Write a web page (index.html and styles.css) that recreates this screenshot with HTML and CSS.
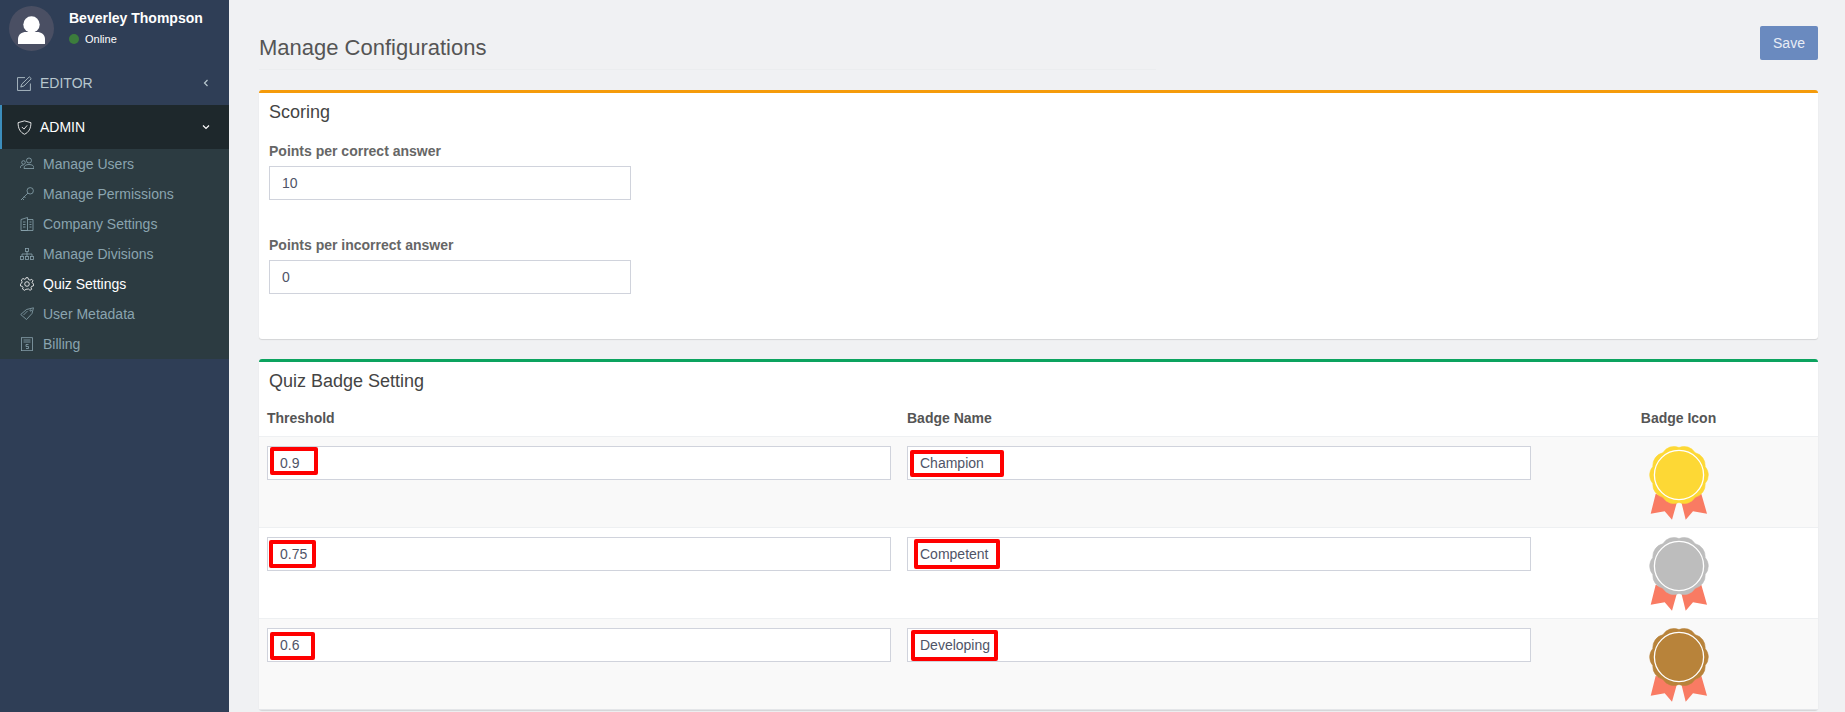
FILE: index.html
```html
<!DOCTYPE html>
<html lang="en">
<head>
<meta charset="utf-8">
<title>Manage Configurations</title>
<link rel="stylesheet" href="styles.css">
</head>
<body>
<svg class="defs" width="0" height="0" aria-hidden="true">
  <symbol id="medal" viewBox="0 0 60 74">
    <path fill="#f97b63" d="M6.7 47.7 1.7 67.7 15.7 65.3 23 73.7 28 56ZM52.3 47.7 58 67.7 44 65.3 36.7 73.7 32.3 56Z"/>
    <path fill="currentColor" stroke="currentColor" stroke-width=".6" d="M30 1.500A13 13 0 0 1 46.160 6.750A13 13 0 0 1 56.150 20.500A13 13 0 0 1 56.150 37.500A13 13 0 0 1 46.160 51.250A13 13 0 0 1 30 56.500A13 13 0 0 1 13.840 51.250A13 13 0 0 1 3.850 37.500A13 13 0 0 1 3.850 20.500A13 13 0 0 1 13.840 6.750A13 13 0 0 1 30 1.500Z"/>
    <circle cx="30" cy="29" r="24.600" fill="none" stroke="#fff" stroke-width="1.300"/>
  </symbol>
</svg>
<div class="app">
  <aside class="sidebar">
    <div class="user">
      <div class="avatar">
        <svg viewBox="0 0 45 45" width="45" height="45"><circle cx="22.500" cy="18.500" r="8.200" fill="#fff"/><path fill="#fff" d="M9 38V33C9 28.500 13 26 17 26H28C32 26 36 28.500 36 33V38Z"/></svg>
      </div>
      <div class="user-info">
        <div class="user-name">Beverley Thompson</div>
        <div class="user-status"><span class="dot"></span>Online</div>
      </div>
    </div>
    <nav>
      <div class="nav-head">
        <svg class="ico" viewBox="0 0 14 14"><path d="M12.500 7V13.500H.5V1.500H7.500"/><path d="M4.500 7.500 11.500.8 13.300 2.500 6.500 9.300 3.500 10.300Z"/></svg>
        <span>EDITOR</span>
        <svg class="chev" viewBox="0 0 8 8"><path d="M5.500 1 2.500 4 5.500 7"/></svg>
      </div>
      <div class="nav-head nav-head-open">
        <svg class="ico" viewBox="0 0 14 14"><path d="M7 .8 13 2.500C13 8 11 11.500 7 13.300 3 11.500 1 8 1 2.500Z"/><path d="M4.500 6.500 6.500 8.500 9.500 5"/></svg>
        <span>ADMIN</span>
        <svg class="chev" viewBox="0 0 8 8"><path d="M1 2.500 4 5.500 7 2.500"/></svg>
      </div>
      <ul class="sub">
        <li class="sub-item">
          <svg class="ico" viewBox="0 0 14 14"><circle cx="9" cy="3.500" r="2.500"/><path d="M4 11.500C4 8.500 6 7.500 9 7.500S14 8.500 14 11.500Z"/><circle cx="3.500" cy="5.500" r="1.800"/><path d="M.3 11C.3 9 1.500 8 3.500 8"/></svg>
          Manage Users
        </li>
        <li class="sub-item">
          <svg class="ico" viewBox="0 0 14 14"><circle cx="10.200" cy="3.800" r="3.200"/><path d="M8 6 1 13M2.500 11.500 4 13M4 9.500 5.500 11"/></svg>
          Manage Permissions
        </li>
        <li class="sub-item">
          <svg class="ico" viewBox="0 0 14 14"><path d="M1 13.500V2.500L7.500.5V13.500ZM7.500 2.500H13V13.500H1M3 5H5.500M3 7.500H5.500M3 10H5.500M9.500 5H11.500M9.500 7.500H11.500M9.500 10H11.500"/></svg>
          Company Settings
        </li>
        <li class="sub-item">
          <svg class="ico" viewBox="0 0 14 14"><rect x="5.500" y="1.500" width="3" height="3"/><rect x=".5" y="9.500" width="3" height="3"/><rect x="5.500" y="9.500" width="3" height="3"/><rect x="10.500" y="9.500" width="3" height="3"/><path d="M7 4.500V9.500M2 9.500V7H12V9.500"/></svg>
          Manage Divisions
        </li>
        <li class="sub-item sub-item-active">
          <svg class="ico" viewBox="0 0 14 14"><circle cx="7" cy="7" r="2.300"/><path d="M6 .7H8L8.500 2.500 10 3.200 11.700 2.300 13 3.800 12 5.300 12.500 6.300 13.800 7 13.300 9 11.700 9.300 11 10.700 11.700 12.300 10 13.300 8.500 12 6 12.300 4.500 13.300 2.500 12 3 10.500 2.300 9.300.5 9 .3 7 1.800 6 2 4.500 1.300 3 3 1.500 4.700 2.300 5.700 1.800Z"/></svg>
          Quiz Settings
        </li>
        <li class="sub-item">
          <svg class="ico" viewBox="0 0 14 14"><path d="M.7 7.500 6.500 2.500 13.500.8 12 6.500 6.500 12.500Z"/><path d="M3.500 8 7.500 4"/><circle cx="10.700" cy="3.500" r=".7"/></svg>
          User Metadata
        </li>
        <li class="sub-item">
          <svg class="ico" viewBox="0 0 14 14"><rect x="1.500" y=".7" width="11" height="13"/><path d="M3.500 3H10.500M3.500 5H10.500M8.500 7.500H6V9.500H8.500V11.500H6"/></svg>
          Billing
        </li>
      </ul>
    </nav>
  </aside>
  <main class="main">
    <header class="page-head">
      <div class="page-title-wrap"><h1 class="page-title">Manage Configurations</h1></div>
      <button class="btn-save" type="button">Save</button>
    </header>
    <section class="panel panel-orange">
      <h2 class="panel-title">Scoring</h2>
      <div class="field">
        <label class="field-label">Points per correct answer</label>
        <input class="text-input text-input-short" type="text" value="10">
      </div>
      <div class="field">
        <label class="field-label">Points per incorrect answer</label>
        <input class="text-input text-input-short" type="text" value="0">
      </div>
    </section>
    <section class="panel panel-green">
      <h2 class="panel-title">Quiz Badge Setting</h2>
      <table class="badge-table">
        <thead>
          <tr><th class="col-a">Threshold</th><th class="col-b">Badge Name</th><th class="col-c">Badge Icon</th></tr>
        </thead>
        <tbody>
          <tr>
            <td><div class="mark-wrap"><input class="text-input" type="text" value="0.9"><span class="mark mark-t1"></span></div></td>
            <td><div class="mark-wrap"><input class="text-input" type="text" value="Champion"><span class="mark mark-n1"></span></div></td>
            <td class="medal-cell"><svg class="medal medal-gold"><use href="#medal"/></svg></td>
          </tr>
          <tr>
            <td><div class="mark-wrap"><input class="text-input" type="text" value="0.75"><span class="mark mark-t2"></span></div></td>
            <td><div class="mark-wrap"><input class="text-input" type="text" value="Competent"><span class="mark mark-n2"></span></div></td>
            <td class="medal-cell"><svg class="medal medal-silver"><use href="#medal"/></svg></td>
          </tr>
          <tr>
            <td><div class="mark-wrap"><input class="text-input" type="text" value="0.6"><span class="mark mark-t3"></span></div></td>
            <td><div class="mark-wrap"><input class="text-input" type="text" value="Developing"><span class="mark mark-n3"></span></div></td>
            <td class="medal-cell"><svg class="medal medal-bronze"><use href="#medal"/></svg></td>
          </tr>
        </tbody>
      </table>
    </section>
  </main>
</div>
</body>
</html>
```
FILE: styles.css
```css
* { box-sizing: border-box; }
html, body { margin: 0; height: 712px; overflow: hidden; }
body { font-family: "Liberation Sans", Arial, sans-serif; font-size: 14px; color: #4f5467; background: #f0f1f3; }
.defs { position: absolute; }
.app { display: flex; height: 712px; }

.sidebar { width: 229px; flex: none; background: #2f3e56; }
.user { display: flex; height: 61px; padding: 6px 0 0 9px; }
.avatar { width: 45px; height: 45px; border-radius: 50%; background: #4a4f63; overflow: hidden; }
.avatar svg { display: block; }
.user-info { margin-left: 15px; }
.user-name { margin-top: 3px; font-weight: 700; color: #fff; line-height: 18px; }
.user-status { display: flex; align-items: center; margin-top: 5px; font-size: 11px; line-height: 14px; color: #fff; }
.dot { width: 10px; height: 10px; margin-right: 6px; border-radius: 50%; background: #3c7d3c; }

.nav-head { display: flex; align-items: center; height: 44px; padding-left: 17px; color: #b8c7ce; }
.nav-head .ico { margin-right: 8px; width: 15px; height: 15px; }
.nav-head span { flex: 1; }
.chev { width: 8px; height: 8px; margin-right: 19px; fill: none; stroke: currentColor; stroke-width: 1.2; }
.nav-head-open { background: #1e282c; color: #fff; border-left: 2px solid #3c8dbc; padding-left: 15px; }
.ico { width: 14px; height: 14px; flex: none; fill: none; stroke: currentColor; stroke-width: .8; }
.sub { list-style: none; margin: 0; padding: 0; background: #2c3b41; }
.sub-item { display: flex; align-items: center; height: 30px; padding-left: 20px; color: #8aa4af; }
.sub-item .ico { margin-right: 9px; }
.sub-item-active { color: #fff; }

.main { flex: 1; min-width: 0; padding: 26px 27px 0 30px; }
.page-head { display: flex; justify-content: space-between; align-items: flex-start; height: 64px; }
.page-title-wrap { width: 897px; height: 44px; border-bottom: 1px solid #ebedef; }
.page-title { margin: 9px 0 0; font-size: 22px; font-weight: 400; line-height: 25px; color: #555; }
.btn-save { width: 58px; height: 34px; padding: 0; border: 0; border-radius: 2px; background: #6a8abf; color: #e8edf6; font: 14px "Liberation Sans", Arial, sans-serif; }

.panel { margin-bottom: 20px; background: #fff; border-top: 3px solid; border-radius: 3px; box-shadow: 0 1px 1px rgba(0,0,0,.12); }
.panel-orange { height: 249px; padding: 0 10px; border-color: #f59b0a; }
.panel-green { border-color: #0ca35f; margin-bottom: 0; }
.panel-title { margin: 0; padding-top: 9px; font-size: 18px; font-weight: 400; line-height: 20px; color: #444; }
.panel-green .panel-title { padding-left: 10px; }
.field { margin-top: 21px; }
.field + .field { margin-top: 37px; }
.field-label { display: block; margin-bottom: 7px; font-weight: 700; line-height: 16px; color: #666; }

.text-input { display: block; width: 100%; height: 34px; padding: 0 12px; border: 1px solid #d0d3dc; border-radius: 0; background: #fff; color: #4f5467; font: 14px "Liberation Sans", Arial, sans-serif; outline: 0; }
.text-input-short { width: 362px; }

.badge-table { width: 100%; margin-top: 10px; table-layout: fixed; border-collapse: collapse; }
.col-a, .col-b { width: 640px; }
.badge-table th { padding: 8px; height: 35px; text-align: left; font-weight: 700; color: #555; }
.badge-table th.col-c { text-align: center; }
.badge-table td { padding: 9px 8px 0; height: 91px; vertical-align: top; border-top: 1px solid #eef0f2; }
.badge-table tbody tr:nth-child(odd) { background: #f9f9f9; }
.badge-table tbody tr:last-child td { border-bottom: 1px solid #e4e6e9; }
.mark-wrap { position: relative; }
.mark { position: absolute; border: 4px solid #f00; border-radius: 2px; }
.mark-t1 { left: 3px; top: 1px; width: 48px; height: 28px; }
.mark-t2 { left: 2px; top: 3px; width: 47px; height: 28px; }
.mark-t3 { left: 3px; top: 4px; width: 45px; height: 28px; }
.mark-n1 { left: 3px; top: 4px; width: 94px; height: 27px; }
.mark-n2 { left: 7px; top: 2px; width: 86px; height: 30px; }
.mark-n3 { left: 4px; top: 2px; width: 87px; height: 31px; }
.medal-cell { text-align: center; }
.medal { display: block; width: 60px; height: 74px; margin: 0 auto; }
.medal-gold { color: #fdd835; }
.medal-silver { color: #bdbdbd; }
.medal-bronze { color: #b8833a; }
```
